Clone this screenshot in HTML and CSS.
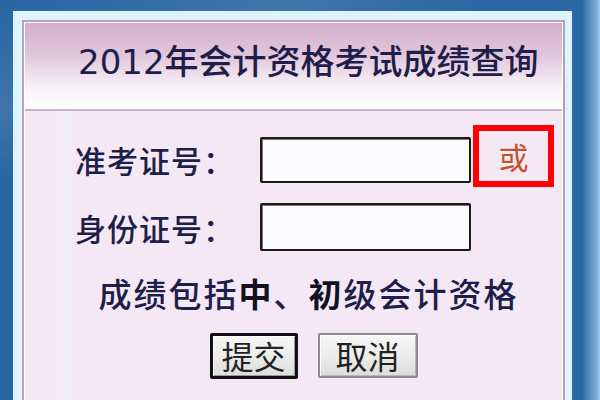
FILE: index.html
```html
<!DOCTYPE html>
<html lang="zh-CN">
<head>
<meta charset="utf-8">
<title>2012年会计资格考试成绩查询</title>
<link rel="stylesheet" href="styles.css">
</head>
<body>
<div class="frame">
  <div class="panel">
    <div class="header">
      <h1 class="title">2012年会计资格考试成绩查询</h1>
    </div>
    <form class="form">
      <div class="row row-first">
        <label class="label" for="zkz">准考证号：</label>
        <input class="field" id="zkz" type="text">
        <span class="or">或</span>
      </div>
      <div class="row row-second">
        <label class="label" for="sfz">身份证号：</label>
        <input class="field field-tall" id="sfz" type="text">
      </div>
      <p class="note">成绩包括<b>中</b>、<b>初</b>级会计资格</p>
      <div class="buttons">
        <button class="btn btn-default" type="submit">提交</button>
        <button class="btn" type="reset">取消</button>
      </div>
    </form>
  </div>
</div>
</body>
</html>
```
FILE: styles.css
```css
html, body {
  margin: 0;
  padding: 0;
  height: 100%;
  overflow: hidden;
}
body {
  background:
    linear-gradient(160deg, rgba(255,255,255,0) 0%, rgba(255,255,255,0.10) 18%, rgba(255,255,255,0) 30%),
    linear-gradient(90deg, #2766a2 0%, #2b67a1 97%, #7fb0dc 99.5%, #a8cdef 100%);
  font-family: "DejaVu Sans", "Noto Sans CJK SC", sans-serif;
  color: #1e1e4a;
}
.frame {
  margin: 11px 28px 0 13px;
  height: 389px;
  border: 9px solid #def4fb;
  border-right-width: 7px;
  border-bottom: 0;
  background: #def4fb;
  box-sizing: border-box;
}
.panel {
  height: 100%;
  border: 2px solid #bb9dbd;
  border-bottom: 0;
  box-shadow: inset 1px 1px 0 #ffffff, inset -1px 0 0 #ffffff;
  background: linear-gradient(90deg, #f4e8f5 0%, #f4e8f5 6%, #efeef6 8%, #f4e8f5 10%, #f4e8f5 100%);
  box-sizing: border-box;
  overflow: hidden;
}
.header {
  height: 86px;
  margin: 1px 1px 0 1px;
  background: linear-gradient(180deg, #d3adcc 0%, #e2c9de 40%, #f8f2f7 75%, #ffffff 100%);
  border-bottom: 2px solid #cdb0cb;
  display: flex;
  align-items: center;
  padding-left: 53px;
}
.title {
  margin: 0 0 8px 0;
  font-size: 34px;
  font-weight: 500;
  line-height: 1;
  color: #1e1e48;
}
.form {
  margin: 0;
  padding-top: 14px;
}
.row {
  display: flex;
  align-items: center;
}
.row-first {
  height: 62px;
}
.row-second {
  margin-top: 16px;
  height: 48px;
}
.label {
  width: 185px;
  margin-left: 51px;
  font-family: "Noto Sans CJK SC", sans-serif;
  font-size: 31px;
  font-weight: 500;
  letter-spacing: 1px;
  line-height: 1;
  color: #1e1e4a;
}
.row-first .label {
  margin-top: 6px;
}
.field {
  width: 211px;
  height: 46px;
  margin: 8px 0 0 0;
  padding: 0;
  border: 2px solid #1a1a1a;
  border-radius: 2px;
  background: #fbfbfd;
  box-sizing: border-box;
  box-shadow: inset 1px 1px 0 #777;
}
.field-tall {
  height: 48px;
  margin-top: 0;
}
.or {
  width: 81px;
  height: 62px;
  margin-left: 2px;
  border: 6px solid #ff0000;
  box-sizing: border-box;
  display: flex;
  align-items: center;
  justify-content: center;
  font-family: "Noto Sans CJK SC", sans-serif;
  font-size: 30px;
  color: #c0532c;
  line-height: 1;
}
.note {
  margin: 26px 0 0 0;
  padding-left: 30px;
  text-align: center;
  font-family: "Noto Sans CJK SC", sans-serif;
  font-size: 33px;
  font-weight: 500;
  letter-spacing: 2px;
  line-height: 32px;
  color: #1e1e4a;
}
.note b {
  font-weight: bold;
  color: #111122;
}
.buttons {
  display: flex;
  justify-content: center;
  gap: 20px;
  margin-top: 24px;
  padding-left: 40px;
}
.btn {
  width: 100px;
  height: 45px;
  padding: 0 0 2px 0;
  border: 2px solid #8a8a8a;
  border-radius: 2px;
  background: linear-gradient(180deg, #f6f6f6 0%, #ececec 50%, #dcdcdc 100%);
  box-shadow: inset 1px 1px 0 #ffffff, inset -1px -1px 0 #b8b8b8;
  font-family: "Noto Sans CJK SC", sans-serif;
  font-size: 32px;
  line-height: 1;
  color: #222222;
}
.btn-default {
  width: 88px;
  height: 46px;
  border: 3px solid #111111;
  box-shadow: inset 1px 1px 0 #ffffff, inset -1px -1px 0 #999999;
}
```
